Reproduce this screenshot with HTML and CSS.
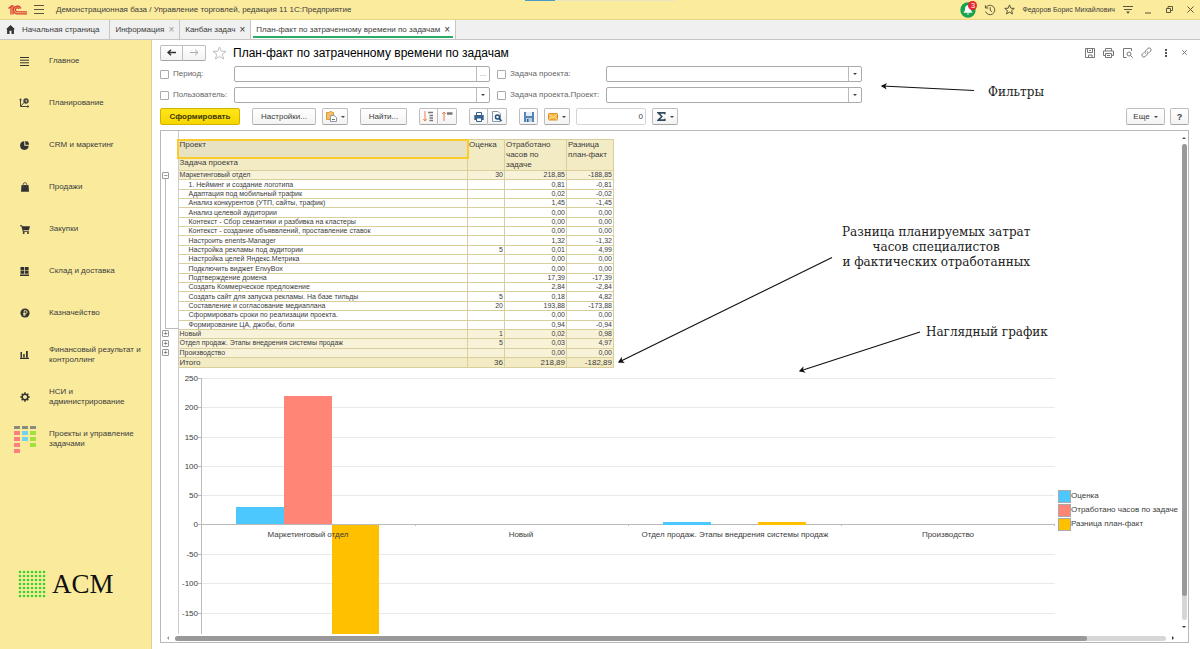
FILE: index.html
```html
<!DOCTYPE html>
<html lang="ru">
<head>
    <meta charset="UTF-8">
    <meta name="viewport" content="width=device-width, initial-scale=1.0">
    <title>План-факт по затраченному времени по задачам</title>
    <link rel="stylesheet" href="styles.css">
</head>
<body>
    <header class="topbar">
        <div class="progress"><span></span></div>
        <svg class="logo" width="20" height="10" viewBox="0 0 20 10" fill="none" stroke="#d8402f" stroke-width="1.3">
            <path d="M0.5 3.6 L3 1.4 V9.4 M5 9.4 V0.8 H3.4"/>
            <path d="M13 3.4 A3.9 3.9 0 1 0 9.6 8.9 H19"/>
            <path d="M11.2 4 A2 2 0 1 0 9.6 6.8 H19"/>
        </svg>
        <button class="plain burger" aria-label="Меню">
            <svg width="10" height="9" viewBox="0 0 10 9" stroke="#5c563a" stroke-width="1"><path d="M0 0.5H10M0 4.5H10M0 8.5H10"/></svg>
        </button>
        <span class="app-name">Демонстрационная база / Управление торговлей, редакция 11 1С:Предприятие</span>
        <div class="topbar-right">
            <button class="plain bell" aria-label="Уведомления">
                <svg width="16" height="16" viewBox="0 0 16 16">
                    <circle cx="8" cy="8" r="7.7" fill="#17a34f"/>
                    <path d="M8 3.2c-2 0-2.9 1.6-2.9 3.4 0 2-.6 3-1.7 4.2h9.2C11.500 9.600 10.900 8.600 10.900 6.600 10.900 4.800 10 3.200 8 3.200zM6.700 11.600h2.600L8 13z" fill="#fff"/>
                </svg>
                <span class="badge">3</span>
            </button>
            <button class="plain" aria-label="История">
                <svg width="12" height="12" viewBox="0 0 12 12" fill="none" stroke="#5c563a"><path d="M2 3.600A4.700 4.700 0 1 1 1.600 7.500M1.400 1.300V4H4.200M6.200 3.200V6.300L8 7.700"/></svg>
            </button>
            <button class="plain" aria-label="Избранное">
                <svg width="11" height="11" viewBox="0 0 11 11" fill="none" stroke="#5c563a"><path d="M5.500 0.900L6.800 4.200L10.300 4.400L7.600 6.600L8.500 10L5.500 8.100L2.500 10L3.400 6.600L0.700 4.400L4.200 4.200Z"/></svg>
            </button>
            <span class="user">Федоров Борис Михайлович</span>
            <button class="plain win" aria-label="Настройки">
                <svg width="10" height="9" viewBox="0 0 10 9"><path d="M0 1.500H10M1 4.500H9" stroke="#5c563a"/><path d="M3.200 6.500H6.800L5 8.700Z" fill="#444"/></svg>
            </button>
            <button class="plain win" aria-label="Свернуть">
                <svg width="7" height="8" viewBox="0 0 7 8"><path d="M0 7H6" stroke="#5c563a"/></svg>
            </button>
            <button class="plain win" aria-label="Развернуть">
                <svg width="7" height="7" viewBox="0 0 7 7" fill="none" stroke="#5c563a"><path d="M0.500 2.500H4.500V6.500H0.500ZM2 2V0.500H6.500V4.500H5"/></svg>
            </button>
            <button class="plain win" aria-label="Закрыть">
                <svg width="7" height="7" viewBox="0 0 7 7" stroke="#5c563a"><path d="M0.500 0.500L6.500 6.500M6.500 0.500L0.500 6.500"/></svg>
            </button>
        </div>
    </header>

    <nav class="tabs">
        <a class="tab home" href="#">
            <svg width="9" height="9" viewBox="0 0 9 9" fill="#333"><path d="M4.500 0L9 4.300H7.900V9H5.500V5.800H3.500V9H1.100V4.300H0Z"/></svg>
            Начальная страница
        </a>
        <a class="tab" href="#">Информация <span class="x dim">×</span></a>
        <a class="tab" href="#">Канбан задач <span class="x">×</span></a>
        <a class="tab active" href="#">План-факт по затраченному времени по задачам <span class="x">×</span></a>
    </nav>

    <div class="workspace">
        <aside class="sidebar">
            <a class="side-item" href="#">
                <span class="side-icon"><svg width="9" height="9" viewBox="0 0 9 9" stroke="#333"><path d="M0 0.500H9M0 3.200H9M0 5.800H9M0 8.500H9"/></svg></span>
                Главное
            </a>
            <a class="side-item" href="#">
                <span class="side-icon"><svg width="11" height="10" viewBox="0 0 11 10" fill="none" stroke="#444"><path d="M1.500 1.500V8.500H9.500M2 8L5 4.500"/><circle cx="7" cy="3" r="2.700" fill="#444" stroke="none"/><path d="M6.300 2.400H7.400V4.200" stroke="#faeb9c" stroke-width=".8"/><path d="M0 2.300L1.500 .3L3 2.300ZM8.400 7L10.400 8.500L8.400 10Z" fill="#444" stroke="none"/></svg></span>
                Планирование
            </a>
            <a class="side-item" href="#">
                <span class="side-icon"><svg width="9" height="9" viewBox="0 0 9 9" fill="#333"><path d="M4.300 0.300V4.800H8.700A4.300 4.300 0 1 1 4.300 0.300Z"/><path d="M5.300 0A3.700 3.700 0 0 1 9 3.800H5.300Z"/></svg></span>
                CRM и маркетинг
            </a>
            <a class="side-item" href="#">
                <span class="side-icon"><svg width="8" height="10" viewBox="0 0 8 10"><path d="M0.500 3H7.500L8 9.800H0Z" fill="#333"/><path d="M2.300 4.500V2.300A1.700 1.700 0 0 1 5.700 2.300V4.500" fill="none" stroke="#555" stroke-width=".9"/></svg></span>
                Продажи
            </a>
            <a class="side-item" href="#">
                <span class="side-icon"><svg width="10" height="9" viewBox="0 0 10 9" fill="#333"><path d="M0 0.300H2L2.500 1.300H10L8.900 5.300H3.400L3.600 6.200H9V7H2.900L1.400 1.200H0Z"/><circle cx="3.700" cy="8" r="1"/><circle cx="8" cy="8" r="1"/></svg></span>
                Закупки
            </a>
            <a class="side-item" href="#">
                <span class="side-icon"><svg width="9" height="9" viewBox="0 0 9 9" fill="#333"><path d="M.5 0H4.200V3.200H.5ZM4.900 0H8.600V3.200H4.900ZM.5 3.800H4.200V6.800H.5ZM4.900 3.800H8.600V6.800H4.900ZM0 7.500H9V9H0Z"/></svg></span>
                Склад и доставка
            </a>
            <a class="side-item" href="#">
                <span class="side-icon"><svg width="10" height="10" viewBox="0 0 10 10"><circle cx="5" cy="5" r="4.600" fill="#333"/><path d="M4.200 8V2.600H5.600A1.400 1.400 0 0 1 5.600 5.500H3.200M3.200 6.800H5.800" fill="none" stroke="#faeb9c" stroke-width=".9"/></svg></span>
                Казначейство
            </a>
            <a class="side-item" href="#">
                <span class="side-icon"><svg width="9" height="8" viewBox="0 0 9 8" fill="#333"><path d="M.5 1H2V6.500H.5ZM3.200 3H4.700V6.500H3.200ZM6 0H7.800V6.500H6ZM0 6.800H9V8H0Z"/></svg></span>
                Финансовый результат и контроллинг
            </a>
            <a class="side-item" href="#">
                <span class="side-icon"><svg width="10" height="10" viewBox="0 0 10 10" fill="none" stroke="#333"><circle cx="5" cy="5" r="2.800" stroke-width="1.500"/><path d="M5 .3V2M5 8V9.700M.3 5H2M8 5H9.700M1.700 1.700L2.900 2.900M7.100 7.100L8.300 8.300M8.300 1.700L7.100 2.900M2.900 7.100L1.700 8.300" stroke-width="1.500"/></svg></span>
                НСИ и администрирование
            </a>
            <a class="side-item" href="#">
                <span class="side-icon">
                    <svg width="24" height="29" viewBox="0 0 24 29">
                        <path d="M1 1H7V4H1ZM9 1H15V4H9ZM17 1H23V4H17Z" fill="#8b8a80"/>
                        <path d="M1 6H7V10H1ZM1 12H7V16H1ZM1 18H7V22H1ZM1 24H7V28H1Z" fill="#fb8080"/>
                        <path d="M9 6H15V10H9ZM9 12H15V16H9Z" fill="#6fd3f0"/>
                        <path d="M17 6H23V10H17ZM17 12H23V16H17ZM17 18H23V22H17Z" fill="#a2e03c"/>
                    </svg>
                </span>
                Проекты и управление задачами
            </a>
            <div class="brand">
                <svg width="28" height="28" viewBox="0 0 28 28">
                    <defs><pattern id="dots" width="4" height="4" patternUnits="userSpaceOnUse"><circle cx="2" cy="2" r="1.300" fill="#32d52e"/></pattern></defs>
                    <rect width="28" height="28" fill="url(#dots)"/>
                </svg>
                ACM
            </div>
        </aside>

        <main class="page">
            <div class="title-row">
                <div class="btn-group nav-btns">
                    <button class="btn" aria-label="Назад"><svg width="9" height="7" viewBox="0 0 9 7" fill="none" stroke="#333" stroke-width="1.400"><path d="M9 3.500H1M4 .7L1 3.500L4 6.300"/></svg></button>
                    <button class="btn" aria-label="Вперед"><svg width="9" height="7" viewBox="0 0 9 7" fill="none" stroke="#aaa"><path d="M0 3.500H8M5 .7L8 3.500L5 6.300"/></svg></button>
                </div>
                <button class="plain" aria-label="В избранное">
                    <svg width="15" height="14" viewBox="0 0 15 14" fill="#fff" stroke="#b9bdc2"><path d="M7.500 .9L9.200 5.100L14 5.400L10.300 8.300L11.500 13L7.500 10.400L3.500 13L4.700 8.300L1 5.400L5.800 5.100Z"/></svg>
                </button>
                <h1>План-факт по затраченному времени по задачам</h1>
                <div class="page-tools">
                    <button class="plain" aria-label="Сохранить"><svg width="10" height="10" viewBox="0 0 10 10" fill="none" stroke="#777"><path d="M.5 .5H9.500V9.500H.5ZM2.500 .5V4.500H7.500V.5M3.500 9.500V7H7V9.500M4 2.500H6"/></svg></button>
                    <button class="plain" aria-label="Печать"><svg width="11" height="10" viewBox="0 0 11 10" fill="none" stroke="#777"><path d="M2.500 3V.5H8.500V3M2.500 7.500H.5V3H10.500V7.500H8.500M2.500 5.500H8.500V9.500H2.500ZM4 7.500H7"/></svg></button>
                    <button class="plain" aria-label="Просмотр"><svg width="10" height="10" viewBox="0 0 10 10" fill="none" stroke="#777"><path d="M3.500 9.500H.5V.5H8.500V3"/><circle cx="6" cy="6" r="2"/><path d="M7.500 7.500L9.700 9.700"/></svg></button>
                    <button class="plain" aria-label="Ссылка"><svg width="11" height="11" viewBox="0 0 11 11" fill="none" stroke="#777"><path d="M4.500 6.500A2 2 0 0 1 4.500 4L6.800 1.500A1.900 1.900 0 0 1 9.500 4.200L8 5.700M6.500 4.500A2 2 0 0 1 6.500 7L4.200 9.500A1.900 1.900 0 0 1 1.500 6.800L3 5.300"/></svg></button>
                    <button class="plain" aria-label="Еще"><svg width="2" height="8" viewBox="0 0 2 8" fill="#555"><path d="M0 0H2V2H0ZM0 3H2V5H0ZM0 6H2V8H0Z"/></svg></button>
                    <button class="plain" aria-label="Закрыть"><svg width="5" height="5" viewBox="0 0 5 5" stroke="#777"><path d="M.3 .3L4.700 4.700M4.700 .3L.3 4.700"/></svg></button>
                </div>
            </div>

            <form class="filters">
                <label><input type="checkbox"> Период:</label>
                <div class="field"><input type="text" aria-label="Период"><button type="button" aria-label="Выбрать период">...</button></div>
                <label><input type="checkbox"> Задача проекта:</label>
                <div class="field drop"><select aria-label="Задача проекта"><option></option></select></div>
                <label><input type="checkbox"> Пользователь:</label>
                <div class="field drop"><select aria-label="Пользователь"><option></option></select></div>
                <label><input type="checkbox"> Задача проекта.Проект:</label>
                <div class="field drop"><select aria-label="Задача проекта.Проект"><option></option></select></div>
            </form>

            <div class="toolbar">
                <button class="btn primary">Сформировать</button>
                <div class="set">
                    <button class="btn settings">Настройки...</button>
                    <button class="btn icon-drop" aria-label="Варианты">
                        <svg width="11" height="11" viewBox="0 0 11 11"><path d="M.5 1.500H3L4 .5H5.500L6.500 1.500H7.500V8.500H.5Z" fill="#f2c063" stroke="#d79a35"/><path d="M4.500 4.500H8L10.500 6.500V10.500H4.500Z" fill="#fff" stroke="#8d99a8"/><path d="M6 8.500H9" stroke="#4d8a55"/></svg>
                        <i class="caret"></i>
                    </button>
                </div>
                <button class="btn find">Найти...</button>
                <div class="btn-group">
                    <button class="btn" aria-label="Развернуть группы"><svg width="11" height="11" viewBox="0 0 11 11" fill="none"><path d="M2 0V10M.3 8L2 10L3.700 8" stroke="#ee7c4c"/><path d="M5 1.500H10M6.500 4.500H10M6.500 7H10M6.500 9.500H10" stroke="#777" stroke-width="1.500"/></svg></button>
                    <button class="btn" aria-label="Свернуть группы"><svg width="11" height="11" viewBox="0 0 11 11" fill="none"><path d="M2 10V1M.3 3L2 1L3.700 3" stroke="#ee7c4c"/><path d="M5 2.500H10.500" stroke="#777" stroke-width="2.500"/></svg></button>
                </div>
                <div class="btn-group">
                    <button class="btn" aria-label="Печать"><svg width="10" height="10" viewBox="0 0 10 10"><path d="M.3 3H9.700V8H.3Z" fill="#38608c"/><path d="M2.500 .5H7.500V3.500H2.500ZM2.500 6H7.500V9.500H2.500Z" fill="#fff" stroke="#38608c"/></svg></button>
                    <button class="btn" aria-label="Предварительный просмотр"><svg width="10" height="11" viewBox="0 0 10 11" fill="none"><path d="M.5 .5H6L8.500 3V10.500H.5Z" stroke="#8f9aa6"/><circle cx="5.500" cy="6" r="2" stroke="#1e4f7d" stroke-width="1.500"/><path d="M7 7.500L9.500 10" stroke="#1e4f7d" stroke-width="1.700"/></svg></button>
                </div>
                <div class="set">
                    <button class="btn square" aria-label="Сохранить"><svg width="10" height="10" viewBox="0 0 10 10"><path d="M0 0H10V10H0Z" fill="#5883b5"/><path d="M2 0H8V4H2Z" fill="#e3ebf4"/><path d="M2 6H8V10H2Z" fill="#b9cde2"/><path d="M3 7H4.500V10H3Z" fill="#38608c"/></svg></button>
                    <button class="btn icon-drop" aria-label="Отправить">
                        <svg width="10" height="8" viewBox="0 0 10 8"><path d="M.5 .5H9.500V7H.5Z" fill="#f5b640" stroke="#d9932a"/><path d="M.5 .5L5 4.500L9.500 .5M.5 7L3.500 3.500M9.500 7L6.500 3.500" fill="none" stroke="#fff0c2" stroke-width=".8"/></svg>
                        <i class="caret"></i>
                    </button>
                    <input class="sum" type="text" value="0" aria-label="Сумма">
                    <button class="btn icon-drop" aria-label="Сумма по выделению">
                        <svg width="9" height="9" viewBox="0 0 9 9" fill="none" stroke="#34495e" stroke-width="1.600"><path d="M7.800 2.300V.9H1.300L4.800 4.500L1.300 8.100H7.800V6.700"/></svg>
                        <i class="caret"></i>
                    </button>
                </div>
                <div class="set right">
                    <button class="btn more">Еще <i class="caret"></i></button>
                    <button class="btn square help">?</button>
                </div>
            </div>

            <div class="report">
                <div class="sheet">
                    <table>
                        <colgroup><col class="c-tree"><col class="c-name"><col class="c-est"><col class="c-fact"><col class="c-diff"></colgroup>
                        <thead>
                            <tr class="h1"><td class="tree" rowspan="2"></td><th class="selected">Проект</th><th rowspan="2">Оценка</th><th rowspan="2">Отработано часов по задаче</th><th rowspan="2">Разница план-факт</th></tr>
                            <tr class="h2"><th>Задача проекта</th></tr>
                        </thead>
                        <tbody>
                            <tr class="group"><td class="tree start"><button aria-label="Свернуть">−</button></td><td>Маркетинговый отдел</td><td>30</td><td>218,85</td><td>-188,85</td></tr>
                            <tr><td class="tree line"></td><td>1. Нейминг и создание логотипа</td><td></td><td>0,81</td><td>-0,81</td></tr>
                            <tr><td class="tree line"></td><td>Адаптация под мобильный трафик</td><td></td><td>0,02</td><td>-0,02</td></tr>
                            <tr><td class="tree line"></td><td>Анализ конкурентов (УТП, сайты, трафик)</td><td></td><td>1,45</td><td>-1,45</td></tr>
                            <tr><td class="tree line"></td><td>Анализ целевой аудитории</td><td></td><td>0,00</td><td>0,00</td></tr>
                            <tr><td class="tree line"></td><td>Контекст - Сбор семантики и разбивка на кластеры</td><td></td><td>0,00</td><td>0,00</td></tr>
                            <tr><td class="tree line"></td><td>Контекст - создание объяввлений, проставление ставок</td><td></td><td>0,00</td><td>0,00</td></tr>
                            <tr><td class="tree line"></td><td>Настроить enents-Manager</td><td></td><td>1,32</td><td>-1,32</td></tr>
                            <tr><td class="tree line"></td><td>Настройка рекламы под аудитории</td><td>5</td><td>0,01</td><td>4,99</td></tr>
                            <tr><td class="tree line"></td><td>Настройка целей Яндекс.Метрика</td><td></td><td>0,00</td><td>0,00</td></tr>
                            <tr><td class="tree line"></td><td>Подключить виджет EnvyBox</td><td></td><td>0,00</td><td>0,00</td></tr>
                            <tr><td class="tree line"></td><td>Подтверждение домена</td><td></td><td>17,39</td><td>-17,39</td></tr>
                            <tr><td class="tree line"></td><td>Создать Коммерческое предложение</td><td></td><td>2,84</td><td>-2,84</td></tr>
                            <tr><td class="tree line"></td><td>Создать сайт для запуска рекламы. На базе тильды</td><td>5</td><td>0,18</td><td>4,82</td></tr>
                            <tr><td class="tree line"></td><td>Составление и согласование медиаплана</td><td>20</td><td>193,88</td><td>-173,88</td></tr>
                            <tr><td class="tree line"></td><td>Сформировать сроки по реализации проекта.</td><td></td><td>0,00</td><td>0,00</td></tr>
                            <tr><td class="tree line end"></td><td>Формирование ЦА, джобы, боли</td><td></td><td>0,94</td><td>-0,94</td></tr>
                            <tr class="group"><td class="tree"><button aria-label="Развернуть">+</button></td><td>Новый</td><td>1</td><td>0,02</td><td>0,98</td></tr>
                            <tr class="group"><td class="tree"><button aria-label="Развернуть">+</button></td><td>Отдел продаж. Этапы внедрения системы продаж</td><td>5</td><td>0,03</td><td>4,97</td></tr>
                            <tr class="group"><td class="tree"><button aria-label="Развернуть">+</button></td><td>Производство</td><td></td><td>0,00</td><td>0,00</td></tr>
                        </tbody>
                        <tfoot>
                            <tr><td class="tree"></td><td>Итого</td><td>36</td><td>218,89</td><td>-182,89</td></tr>
                        </tfoot>
                    </table>

                    <div class="chart">
                        <svg width="880" height="266" viewBox="0 0 880 266">
                            <path class="grid" d="M24 10.500H877M24 39.500H877M24 69.500H877M24 98.500H877M24 127.500H877M24 186.500H877M24 215.500H877M24 245.500H877"/>
                            <path class="axis" d="M23.500 10V266M20 10.500H24M20 39.500H24M20 69.500H24M20 98.500H24M20 127.500H24M20 156.500H877M20 186.500H24M20 215.500H24M20 245.500H24M237.500 156V158M450.500 156V158M663.500 156V158M876.500 156V158"/>
                            <g fill="#4dc8ff"><rect x="58" y="139" width="48" height="17"/><rect x="485" y="154" width="48" height="3"/></g>
                            <rect x="106" y="28" width="48" height="128" fill="#ff8576"/>
                            <g fill="#ffc000"><rect x="154" y="157" width="47" height="109"/><rect x="580" y="154" width="48" height="3"/></g>
                            <g class="y-labels">
                                <text x="20" y="13">250</text><text x="20" y="42">200</text><text x="20" y="72">150</text>
                                <text x="20" y="101">100</text><text x="20" y="130">50</text><text x="20" y="159">0</text>
                                <text x="20" y="189">-50</text><text x="20" y="218">-100</text><text x="20" y="248">-150</text>
                            </g>
                            <g class="x-labels">
                                <text x="130" y="169">Маркетинговый отдел</text><text x="343" y="169">Новый</text>
                                <text x="557" y="169">Отдел продаж. Этапы внедрения системы продаж</text><text x="770" y="169">Производство</text>
                            </g>
                        </svg>
                        <ul class="legend">
                            <li class="est">Оценка</li>
                            <li class="fact">Отработано часов по задаче</li>
                            <li class="diff">Разница план-факт</li>
                        </ul>
                    </div>
                </div>
                <div class="scroll-y"><i class="up"></i><div class="track"><div class="thumb"></div></div><i class="down"></i></div>
                <div class="scroll-x"><i class="left"></i><div class="track"><div class="thumb"></div></div><i class="right"></i></div>
            </div>

            <svg class="arrows" width="400" height="320" viewBox="600 70 400 320">
                <defs><marker id="head" markerWidth="7" markerHeight="7" refX="5" refY="3.500" orient="auto"><path d="M1 .7L6 3.500L1 6.300L2.300 3.500Z" fill="#111"/></marker></defs>
                <g stroke="#111" stroke-width="1.200">
                    <path d="M974 90.500L882 86" marker-end="url(#head)"/>
                    <path d="M832 257.500L619 362" marker-end="url(#head)"/>
                    <path d="M920 332L800 371" marker-end="url(#head)"/>
                </g>
            </svg>
            <p class="note note-filters">Фильтры</p>
            <p class="note note-diff">Разница планируемых затрат<br>часов специалистов<br>и фактических отработанных</p>
            <p class="note note-chart">Наглядный график</p>
        </main>
    </div>
</body>
</html>
```

FILE: styles.css
```css
* {
    box-sizing: border-box;
}
body {
    margin: 0;
    height: 100vh;
    display: flex;
    flex-direction: column;
    overflow: hidden;
    font-family: "Liberation Sans", Arial, sans-serif;
    font-size: 8px;
    line-height: 10px;
    color: #3c3c3c;
    background: #fff;
}
a {
    color: inherit;
    text-decoration: none;
}
button, input, select {
    font: inherit;
    color: inherit;
    margin: 0;
}
svg {
    display: block;
    flex: none;
}
.plain {
    border: none;
    background: none;
    padding: 0;
    display: flex;
    align-items: center;
    justify-content: center;
}

/* Top bar */
.topbar {
    position: relative;
    display: flex;
    align-items: center;
    height: 20px;
    padding: 0 3px 0 8px;
    background: #fbeb9d;
    border-bottom: 1px solid #e8d684;
}
.progress {
    position: absolute;
    top: 0;
    left: 525px;
    width: 150px;
    height: 1px;
    background: #e8e3c0;
}
.progress span {
    display: block;
    width: 30px;
    height: 1px;
    background: #4a9cc8;
}
.burger {
    margin: 0 12px 0 6px;
}
.topbar-right {
    display: flex;
    align-items: center;
    gap: 8px;
    margin-left: auto;
}
.bell {
    position: relative;
}
.badge {
    position: absolute;
    top: -1px;
    right: -1px;
    width: 9px;
    height: 9px;
    border-radius: 50%;
    background: #e8232a;
    color: #fff;
    font-size: 8px;
    line-height: 9px;
}
.user {
    font-size: 7px;
    margin: 0 -2px 0 -1px;
}
.win {
    width: 13px;
}

/* Open tabs */
.tabs {
    display: flex;
    height: 20px;
    background: #f0f0f0;
    border-bottom: 1px solid #c6c6c6;
}
.tab {
    display: flex;
    align-items: center;
    gap: 4px;
    padding: 0 5px;
    border-right: 1px solid #c6c6c6;
}
.tab.home {
    gap: 7px;
    padding: 0 10px 0 6px;
}
.tab.active {
    position: relative;
    background: #fff;
}
.tab.active::after {
    content: "";
    position: absolute;
    left: 2px;
    right: 2px;
    bottom: 1px;
    height: 2px;
    background: #2bab66;
}
.x {
    font-size: 10px;
    color: #333;
}
.x.dim {
    color: #999;
}

.workspace {
    flex: 1;
    min-height: 0;
    display: flex;
}

/* Section panel */
.sidebar {
    flex: none;
    width: 152px;
    display: flex;
    flex-direction: column;
    background: #faeb9c;
    border-right: 1px solid #d9cf9a;
}
.side-item {
    display: flex;
    align-items: center;
    height: 42px;
    padding-right: 6px;
}
.side-icon {
    flex: none;
    width: 49px;
    display: flex;
    justify-content: center;
}
.brand {
    display: flex;
    align-items: center;
    gap: 6px;
    margin: auto 0 51px 18px;
    font-family: "Liberation Serif", "Times New Roman", serif;
    font-size: 27px;
    line-height: 28px;
    color: #111;
}

/* Report page */
.page {
    position: relative;
    flex: 1;
    min-width: 0;
    display: flex;
    flex-direction: column;
    gap: 5px;
    padding: 4px 11px 6px 8px;
}
.btn {
    display: flex;
    align-items: center;
    justify-content: center;
    height: 17px;
    padding: 0;
    border: 1px solid #bdbdbd;
    border-bottom-color: #a5a5a5;
    border-radius: 2px;
    background: linear-gradient(#fff, #f3f3f3);
}
.btn-group {
    display: flex;
}
.btn-group .btn {
    width: 19px;
}
.btn-group .btn:first-child {
    border-radius: 2px 0 0 2px;
}
.btn-group .btn:last-child {
    border-left: none;
    border-radius: 0 2px 2px 0;
}
.title-row {
    display: flex;
    align-items: center;
    gap: 6px;
    height: 17px;
}
.btn-group.nav-btns .btn {
    width: 23px;
    height: 16px;
}
h1 {
    margin: 0;
    font-size: 12px;
    font-weight: normal;
    line-height: 14px;
    color: #000;
}
.page-tools {
    display: flex;
    margin: 0 -5px 0 auto;
}
.page-tools button {
    width: 19px;
    height: 16px;
}

/* Filters */
.filters {
    display: grid;
    grid-template-columns: 74px 256px 116px 256px;
    row-gap: 5px;
    align-items: center;
}
.filters label {
    display: flex;
    align-items: center;
    gap: 4px;
    white-space: nowrap;
    color: #666;
}
.filters label:nth-of-type(even) {
    padding-left: 7px;
}
.filters input[type="checkbox"] {
    appearance: none;
    width: 9px;
    height: 9px;
    border: 1px solid #aaa;
    border-radius: 1px;
    background: #fff;
}
.field {
    position: relative;
    display: flex;
    height: 16px;
    border: 1px solid #aaa;
    border-radius: 2px;
    background: #fff;
}
.field input, .field select {
    flex: 1;
    min-width: 0;
    padding: 0 3px;
    border: none;
    background: none;
    appearance: none;
}
.field button {
    width: 13px;
    padding: 0;
    border: none;
    border-left: 1px solid #bbb;
    background: none;
    color: #888;
}
.drop::before {
    content: "";
    position: absolute;
    top: 0;
    right: 12px;
    bottom: 0;
    border-left: 1px solid #bbb;
}
.drop::after, .caret {
    border: 2px solid transparent;
    border-top-color: #444;
    border-bottom: none;
}
.drop::after {
    content: "";
    position: absolute;
    top: 6px;
    right: 4px;
}

/* Toolbar */
.toolbar {
    display: flex;
    align-items: center;
    gap: 12px;
}
.set {
    display: flex;
    gap: 6px;
}
.set.right {
    gap: 5px;
    margin-left: auto;
}
.primary {
    width: 80px;
    border-color: #d3b100;
    background: linear-gradient(#ffe61a, #f7d600);
    color: #3c3600;
    font-weight: bold;
}
.settings {
    width: 64px;
}
.find {
    width: 47px;
}
.icon-drop {
    width: 26px;
    gap: 4px;
}
.square {
    width: 19px;
}
.sum {
    width: 70px;
    height: 17px;
    padding: 0 2px;
    border: 1px solid #d5d5d5;
    border-radius: 2px;
    text-align: right;
}
.more {
    width: 39px;
    gap: 4px;
}
.help {
    font-weight: bold;
    font-size: 9px;
}

/* Spreadsheet area */
.report {
    flex: 1;
    min-height: 0;
    display: grid;
    grid-template: minmax(0, 1fr) 8px / minmax(0, 1fr) 8px;
    border: 1px solid #b8b8b8;
}
.sheet {
    overflow: hidden;
    padding-top: 8px;
    background: linear-gradient(#ccc, #ccc) 17px 0 / 1px 100% no-repeat;
}
table {
    table-layout: fixed;
    width: 453px;
    height: 229px;
    border-collapse: collapse;
    font-size: 7px;
    line-height: 8px;
}
.c-tree {
    width: 17px;
}
.c-est {
    width: 37px;
}
.c-fact {
    width: 62px;
}
.c-diff {
    width: 47px;
}
th, td {
    padding: 0 1px;
    border: 1px solid #d9cf9c;
    white-space: nowrap;
    text-align: right;
}
th {
    vertical-align: top;
    background: #f3ebc4;
    font-size: 8px;
    font-weight: normal;
    line-height: 10px;
    text-align: left;
    white-space: normal;
}
.h1 {
    height: 18px;
}
.h2 {
    height: 13px;
}
.selected {
    background: #e8e1c2;
    outline: 2px solid #f9cc2c;
    outline-offset: -1px;
}
td:nth-child(2) {
    padding-left: 10px;
    text-align: left;
}
.group td:nth-child(2), tfoot td:nth-child(2) {
    padding-left: 1px;
}
.group td {
    background: #f8f2d8;
}
tfoot td {
    height: 10px;
    background: #f3ebc4;
    font-size: 8px;
}
td.tree {
    position: relative;
    padding: 0;
    border-width: 0 1px 0 0;
    border-color: #ccc;
    background: none;
}
.tree button {
    position: absolute;
    z-index: 1;
    top: 1px;
    left: 1px;
    width: 7px;
    height: 7px;
    padding: 0;
    border: 1px solid #999;
    border-radius: 1px;
    background: #fff;
    line-height: 5px;
}
.line::before, .start::before {
    content: "";
    position: absolute;
    top: 0;
    bottom: -1px;
    left: 4px;
    border-left: 1px solid #bbb;
}
.start::before {
    top: 5px;
}
.end::before {
    right: 0;
    bottom: 0;
    border-bottom: 1px solid #bbb;
}

/* Chart */
.chart {
    display: flex;
    padding-left: 17px;
}
.grid {
    stroke: #e9e9e9;
}
.axis {
    stroke: #bbb;
}
.chart text {
    fill: #3c3c3c;
}
.y-labels {
    text-anchor: end;
}
.x-labels {
    text-anchor: middle;
}
.legend {
    margin: 121px 0 0;
    padding: 0;
    list-style: none;
    white-space: nowrap;
}
.legend li {
    display: flex;
    align-items: center;
    height: 14px;
}
.legend li::before {
    content: "";
    width: 11px;
    height: 11px;
    border: 1px solid #aaa;
    background: #4dc8ff;
}
.legend .fact::before {
    background: #ff8576;
}
.legend .diff::before {
    background: #ffc000;
}

/* Scrollbars */
.scroll-y, .scroll-x {
    display: flex;
    align-items: center;
    justify-content: space-between;
}
.scroll-y {
    flex-direction: column;
    padding: 6px 0;
}
.scroll-x {
    padding: 0 6px;
}
.track {
    flex: 1;
    border-radius: 3px;
    background: #d6d6d6;
}
.thumb {
    border-radius: 3px;
    background: #999;
}
.scroll-y .track {
    width: 5px;
    margin: 5px 0 6px;
}
.scroll-y .thumb {
    height: 95%;
}
.scroll-x .track {
    height: 5px;
    margin: 0 6px;
}
.scroll-x .thumb {
    width: 92%;
    height: 5px;
}
.report i {
    border: 2px solid transparent;
}
.report .up {
    border-top: none;
    border-bottom-color: #555;
}
.report .down {
    border-bottom: none;
    border-top-color: #333;
}
.report .left {
    border-left: none;
    border-right-color: #999;
}
.report .right {
    border-right: none;
    border-left-color: #333;
}

/* Callouts over the report */
.arrows {
    position: absolute;
    top: 30px;
    left: 448px;
    pointer-events: none;
}
.note {
    position: absolute;
    margin: 0;
    font-family: "DejaVu Serif", serif;
    font-size: 12px;
    line-height: 15px;
    text-align: center;
    white-space: nowrap;
    color: #222;
}
.note-filters {
    top: 45px;
    left: 836px;
}
.note-diff {
    top: 185px;
    left: 690px;
}
.note-chart {
    top: 285px;
    left: 774px;
}
```
